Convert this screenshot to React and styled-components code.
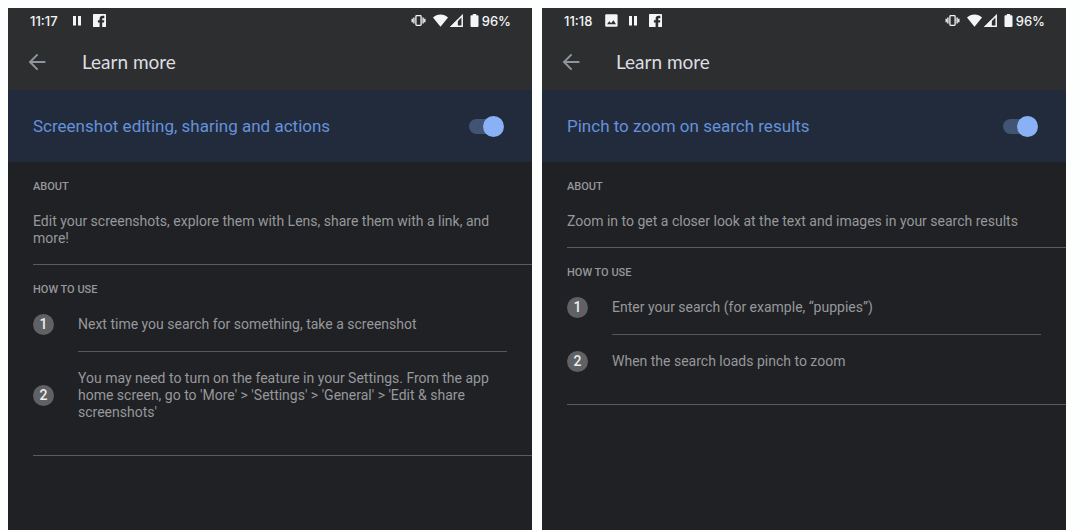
import React, { useState } from "react";
import styled, { createGlobalStyle } from "styled-components";

const GlobalStyle = createGlobalStyle`
  *, *::before, *::after { box-sizing: border-box; }
  body {
    margin: 0;
    background: #fdfefe;
    font-family: Roboto, "Liberation Sans", sans-serif;
  }
`;

const Page = styled.div`
  min-height: 100vh;
  padding: 8px 15px 0 8px;
  display: grid;
  grid-template-columns: repeat(auto-fit, minmax(320px, 1fr));
  gap: 10px;
`;

const Screen = styled.main`
  background: #202124;
  color: #96989b;
`;

const TopArea = styled.header`
  background: #2d2e30;
`;

const StatusBar = styled.div`
  display: flex;
  justify-content: space-between;
  align-items: center;
  height: 25px;
  padding: 0 21px 0 22px;
  color: #f4f5f6;
  font-family: Inter, Roboto, sans-serif;
  font-size: 13px;
  line-height: 16px;
  font-weight: 500;
`;

const Notifications = styled.div`
  display: flex;
  align-items: center;
  gap: 9px;
`;

const Clock = styled.time`
  margin-right: 4px;
`;

const SystemIcons = styled.div`
  display: flex;
  align-items: center;
  gap: 7px;
`;

const SignalPair = styled.div`
  display: flex;
  gap: 2px;
`;

const Battery = styled.span`
  display: flex;
  align-items: center;
  gap: 3px;
`;

const Toolbar = styled.div`
  display: flex;
  align-items: center;
  gap: 36px;
  height: 57px;
  padding-left: 20px;
`;

const BackButton = styled.button`
  display: flex;
  padding: 0;
  border: 0;
  background: none;
  color: #8f959a;
  cursor: pointer;
`;

const Title = styled.h1`
  margin: 0;
  color: #dcdee0;
  font-family: Lato, Roboto, sans-serif;
  font-size: 19px;
  line-height: 24px;
  font-weight: 400;
`;

const FeatureRow = styled.label`
  display: flex;
  align-items: center;
  justify-content: space-between;
  height: 72px;
  padding: 0 28px 0 25px;
  background: #222b3b;
  color: #6592dc;
  font-size: 17px;
  line-height: 24px;
  cursor: pointer;
`;

const Switch = styled.input.attrs({ type: "checkbox", role: "switch" })`
  appearance: none;
  position: relative;
  flex: none;
  width: 35px;
  height: 21px;
  margin: 0;
  cursor: pointer;

  &::before {
    content: "";
    position: absolute;
    inset: 3px 2px 3px 0;
    border-radius: 8px;
    background: #425473;
  }

  &::after {
    content: "";
    position: absolute;
    top: 0;
    left: ${(p) => (p.checked ? 14 : 0)}px;
    width: 21px;
    height: 21px;
    border-radius: 50%;
    background: #8ab0f6;
  }
`;

const Section = styled.section`
  margin-left: 25px;
  padding-top: 17px;
  border-bottom: 1px solid #5a5c5f;
`;

const Heading = styled.h2`
  margin: 0;
  font-size: 11px;
  line-height: 16px;
  font-weight: 500;
`;

const Description = styled.p`
  margin: 0;
  padding: 18px 25px 17px 0;
  font-size: 14px;
  line-height: 17px;
`;

const Steps = styled.ol`
  margin: 0;
  padding: 0 25px 16px 0;
  list-style: none;
`;

const Step = styled.li`
  display: flex;
  align-items: center;
  gap: 24px;
`;

const StepNumber = styled.span`
  flex: none;
  width: 21px;
  height: 21px;
  border-radius: 50%;
  background: #5f6165;
  color: #eceded;
  font-size: 14px;
  line-height: 21px;
  font-weight: 500;
  text-align: center;
`;

const StepText = styled.p`
  flex: 1;
  margin: 0;
  padding: 18px 0;
  font-size: 14px;
  line-height: 17px;
`;

const StepDivider = styled.li`
  height: 1px;
  margin-left: 45px;
  background: #55575a;
`;

const PauseIcon = () => (
  <svg width="13" height="13" viewBox="0 0 13 13" fill="currentColor" aria-hidden="true">
    <path d="M2 2h3v9.4H2zM7 2h3v9.4H7z" />
  </svg>
);

const FacebookIcon = () => (
  <svg width="13" height="13" viewBox="0 0 13 13" aria-hidden="true">
    <rect width="13" height="13" rx="0.6" fill="currentColor" />
    <path d="M6.6 13V8.6H4.9V6.2h1.7V5c0-2 1.1-3.2 3-3.2h1.7v2.4h-1.1c-.8 0-1 .3-1 1v1h2.1l-.3 2.4H9.2V13z" fill="#2d2e30" />
  </svg>
);

const ImageIcon = () => (
  <svg width="13" height="13" viewBox="0 0 13 13" aria-hidden="true">
    <rect x="0.2" y="0.2" width="12.4" height="12.6" rx="1.2" fill="currentColor" />
    <path d="M2 10.2l2.4-3 1.7 2 2.3-3 2.6 4z" fill="#2d2e30" />
  </svg>
);

const VibrateIcon = () => (
  <svg width="15" height="13" viewBox="0 0 15 13" fill="none" stroke="currentColor" aria-hidden="true">
    <rect x="4.9" y="1.6" width="5.2" height="9.8" rx="0.8" strokeWidth="1.3" />
    <path d="M2.9 3.4v6.2M12.1 3.4v6.2M1.2 4.7v3.6M13.8 4.7v3.6" strokeWidth="1.4" />
  </svg>
);

const WifiIcon = () => (
  <svg width="15" height="13" viewBox="0 0 15 13" fill="currentColor" aria-hidden="true">
    <path d="M7.5 12.8L0 3.5C2 1.5 4.6.4 7.5.4S13 1.5 15 3.5z" />
  </svg>
);

const SignalIcon = () => (
  <svg width="13" height="13" viewBox="0 0 13 13" aria-hidden="true">
    <path d="M1.7 12.2L12.2 1.7v10.5z" fill="none" stroke="currentColor" strokeWidth="1.5" />
    <path d="M0 13L7.8 5.2V13z" fill="currentColor" />
  </svg>
);

const BatteryIcon = () => (
  <svg width="9" height="13" viewBox="0 0 9 13" fill="currentColor" aria-hidden="true">
    <path d="M2.8 0h3.4v1.3h1.4c.5 0 .9.4.9.9v9.9c0 .5-.4.9-.9.9H1.4c-.5 0-.9-.4-.9-.9V2.2c0-.5.4-.9.9-.9h1.4z" />
  </svg>
);

const ArrowIcon = () => (
  <svg width="18" height="18" viewBox="0 0 18 18" fill="none" stroke="currentColor" strokeWidth="2" aria-hidden="true">
    <path d="M17.4 9H2.2M9.6 1.4L2 9l7.6 7.6" />
  </svg>
);

function FeatureScreen({ time, hasImage, feature, about, steps }) {
  const [enabled, setEnabled] = useState(true);
  return (
    <Screen>
      <TopArea>
        <StatusBar>
          <Notifications>
            <Clock>{time}</Clock>
            {hasImage && <ImageIcon />}
            <PauseIcon />
            <FacebookIcon />
          </Notifications>
          <SystemIcons>
            <VibrateIcon />
            <SignalPair>
              <WifiIcon />
              <SignalIcon />
            </SignalPair>
            <Battery>
              <BatteryIcon />
              96%
            </Battery>
          </SystemIcons>
        </StatusBar>
        <Toolbar>
          <BackButton type="button" aria-label="Back">
            <ArrowIcon />
          </BackButton>
          <Title>Learn more</Title>
        </Toolbar>
      </TopArea>
      <FeatureRow>
        {feature}
        <Switch checked={enabled} onChange={(e) => setEnabled(e.target.checked)} />
      </FeatureRow>
      <Section>
        <Heading>ABOUT</Heading>
        <Description>{about}</Description>
      </Section>
      <Section>
        <Heading>HOW TO USE</Heading>
        <Steps>
          {steps.map((text, i) => (
            <React.Fragment key={text}>
              {i > 0 && <StepDivider aria-hidden="true" />}
              <Step>
                <StepNumber>{i + 1}</StepNumber>
                <StepText>{text}</StepText>
              </Step>
            </React.Fragment>
          ))}
        </Steps>
      </Section>
    </Screen>
  );
}

export default function App() {
  return (
    <Page>
      <GlobalStyle />
      <FeatureScreen
        time="11:17"
        feature="Screenshot editing, sharing and actions"
        about="Edit your screenshots, explore them with Lens, share them with a link, and more!"
        steps={[
          "Next time you search for something, take a screenshot",
          "You may need to turn on the feature in your Settings. From the app home screen, go to 'More' > 'Settings' > 'General' > 'Edit & share screenshots'",
        ]}
      />
      <FeatureScreen
        time="11:18"
        hasImage
        feature="Pinch to zoom on search results"
        about="Zoom in to get a closer look at the text and images in your search results"
        steps={[
          "Enter your search (for example, “puppies”)",
          "When the search loads pinch to zoom",
        ]}
      />
    </Page>
  );
}
